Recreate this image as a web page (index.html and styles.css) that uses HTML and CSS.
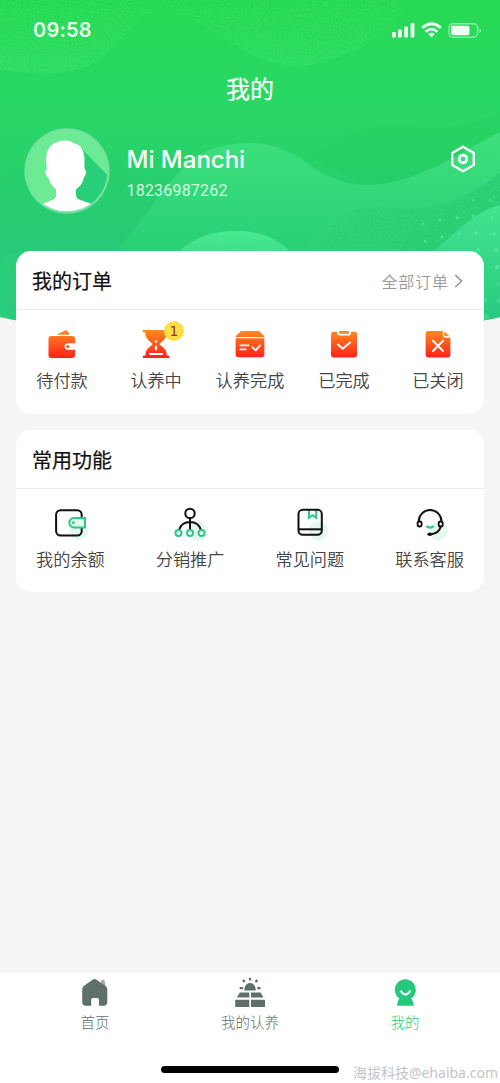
FILE: index.html
```html
<!DOCTYPE html>
<html lang="zh-CN">
<head>
<meta charset="utf-8">
<meta name="viewport" content="width=device-width, initial-scale=1">
<title>我的</title>
<link rel="stylesheet" href="styles.css">
</head>
<body>
<div class="app">
  <svg class="backdrop" viewBox="0 0 500 330" aria-hidden="true">
    <defs>
      <linearGradient id="sky" gradientUnits="userSpaceOnUse" x1="0" y1="0" x2="0" y2="330"><stop offset="0" stop-color="#28da55"/><stop offset=".36" stop-color="#29d667"/><stop offset=".7" stop-color="#26cc70"/><stop offset="1" stop-color="#26c97e"/></linearGradient>
      <linearGradient id="top" x1="0" y1="0" x2="0" y2="1"><stop offset="0" stop-color="#24d750"/><stop offset="1" stop-color="#2bdc60"/></linearGradient>
      <linearGradient id="wave" x1="0" y1="0" x2="0" y2="1"><stop offset="0" stop-color="#3de07b"/><stop offset=".65" stop-color="#28cf77"/><stop offset="1" stop-color="#28cd79"/></linearGradient>
      <linearGradient id="waveR" x1="0" y1="0" x2="1" y2="0"><stop offset="0" stop-color="#2bd176"/><stop offset="1" stop-color="#24c973"/></linearGradient>
      <linearGradient id="dark" x1="0" y1="0" x2="0" y2="1"><stop offset="0" stop-color="#29d464"/><stop offset="1" stop-color="#23cc69"/></linearGradient>
      <linearGradient id="hill" x1="0" y1="0" x2="0" y2="1"><stop offset="0" stop-color="#43e48f"/><stop offset="1" stop-color="#26c97e"/></linearGradient>
      <linearGradient id="mound" x1="0" y1="0" x2="0" y2="1"><stop offset="0" stop-color="#47e894"/><stop offset="1" stop-color="#3bdc8a"/></linearGradient>
      <linearGradient id="left" x1="0" y1="0" x2="0" y2="1"><stop offset="0" stop-color="#28d166"/><stop offset="1" stop-color="#26c97a"/></linearGradient>
      <filter id="grain" x="0" y="0" width="1" height="1" color-interpolation-filters="sRGB">
        <feTurbulence type="fractalNoise" baseFrequency=".75" numOctaves="2" seed="4"/>
        <feColorMatrix values="0 0 0 0 .35  0 0 0 0 .95  0 0 0 0 .55  .9 0 0 0 -.36"/>
        <feComposite in2="SourceGraphic" operator="in" result="n"/>
        <feMerge><feMergeNode in="SourceGraphic"/><feMergeNode in="n"/></feMerge>
      </filter>
      <clipPath id="edge"><path d="M0 0H500V317Q375 345 250 345Q125 345 0 317Z"/></clipPath>
    </defs>
    <g clip-path="url(#edge)">
      <path fill="url(#sky)" d="M0 0H500V330H0Z"/>
      <path fill="url(#top)" filter="url(#grain)" d="M0 0H409C390 35 340 66 297 66C268 66 247 54 224 38C196 20 180 12 163 12C145 12 138 20 126 34C105 58 90 72 50 73Q25 74 0 70Z"/>
      <path fill="url(#left)" d="M0 175C35 150 80 145 110 158C145 176 170 193 180 205L116 260H0Z"/>
      <path fill="url(#dark)" d="M310 158C348 127 380 122 412 126C450 131 475 123 500 112V205C440 200 385 198 310 158Z"/>
      <path fill="url(#wave)" d="M112 255C145 222 155 195 178 173C196 150 223 144 245 143C278 142 298 156 317 170C336 181 350 185 366 185C416 184 456 155 500 132V325H112Z"/>
      <path fill="url(#waveR)" filter="url(#grain)" opacity=".7" d="M300 252C325 225 349 207 376 207C410 210 448 215 500 173V260H300Z"/>
      <path fill="url(#mound)" filter="url(#grain)" d="M176 255C193 236 215 231 237 231C260 231 280 239 293 255Z"/>
      <path fill="url(#hill)" d="M430 255C454 234 475 211 500 205V325H430Z"/>
      <path fill="#2acc7c" filter="url(#grain)" d="M0 259C20 247 39 248 55 251V325H0Z" opacity=".5"/>
      <g fill="#67e8a7" opacity=".7"><circle cx="423" cy="224" r="1.2"/><circle cx="440" cy="220" r="1.2"/><circle cx="457" cy="218" r="1.4"/><circle cx="473" cy="216" r="1.4"/><circle cx="492" cy="217" r="1.5"/><circle cx="425" cy="241" r="1.2"/><circle cx="442" cy="237" r="1.4"/><circle cx="459" cy="234" r="1.5"/><circle cx="476" cy="233" r="1.7"/><circle cx="494" cy="234" r="1.8"/><circle cx="478" cy="250" r="1.8"/><circle cx="496" cy="250" r="2"/><circle cx="497" cy="267" r="2.2"/><circle cx="490" cy="200" r="1"/><circle cx="473" cy="200" r="1"/></g>
      <g fill="#4bdc98" opacity=".6"><circle cx="498" cy="284" r="2.3"/><circle cx="485" cy="300" r="2.4"/><circle cx="499" cy="301" r="2.4"/><circle cx="486" cy="317" r="3"/></g>
    </g>
  </svg>

  <header class="status">
    <span class="time">09:58</span>
    <svg width="90" height="18" viewBox="0 0 90 18">
      <g fill="#effff3"><rect x="1" y="11" width="3.8" height="5.5" rx="1"/><rect x="7" y="8.5" width="3.8" height="8" rx="1"/><rect x="13.2" y="5.5" width="3.8" height="11" rx="1"/><rect x="19.6" y="2" width="3.8" height="14.5" rx="1"/></g>
      <g fill="none" stroke="#effff3" stroke-width="2.7"><path d="M31.2 6.8Q40.5-1.3 49.8 6.8"/><path d="M34.6 10.7Q40.5 5.6 46.4 10.7"/></g><path fill="#effff3" d="M37.3 13Q40.5 10.4 43.7 13L40.5 16.4Z"/>
      <rect x="58" y="2.7" width="28.6" height="13.6" rx="4" fill="none" stroke="#8beca5" stroke-width="1.4"/><rect x="60" y="4.8" width="18.5" height="9.5" rx="2" fill="#effff3"/><path fill="#8beca5" d="M88.4 7Q92 9.4 88.4 12Z"/>
    </svg>
  </header>
  <h1 class="title">我的</h1>

  <section class="profile">
    <svg class="avatar" viewBox="0 0 86 86">
      <defs><clipPath id="face"><circle cx="43" cy="43" r="40.5"/></clipPath></defs>
      <circle cx="43" cy="43" r="42.7" fill="#75e2a0"/><circle cx="43" cy="43" r="40.5" fill="#6ceb94"/>
      <g clip-path="url(#face)"><path fill="#29ce78" d="M57 20L90 54V90H46Z"/>
      <path fill="#fff" d="M42.5 12.5C45 12.5 48 13.6 50 15.4C56 16 60.5 22 60.5 31V41C63 42 62 48 60 49Q58.5 57 52 61.5V67C52 73 60 72 68 76.5Q57 83.5 43 83.5Q28 83.5 18 76.5C25 72 32 73 32 67V61Q26 57 24.5 50C21 48 20.5 42 23 41C22 34 21.5 28 24 22Q28 12.5 42.5 12.5Z"/></g>
    </svg>
    <div class="who"><div class="name">Mi Manchi</div><div class="phone">18236987262</div></div>
    <svg class="gear" viewBox="0 0 28 30" fill="none" stroke="#fff" stroke-width="2.4" stroke-linejoin="round"><path d="M14 2.7L24.8 9V21L14 27.3L3.2 21V9Z"/><circle cx="14" cy="15" r="3.8" stroke-width="2.7"/></svg>
  </section>

  <svg class="defs" width="0" height="0"><defs><linearGradient id="fire" gradientUnits="userSpaceOnUse" x1="0" y1="2" x2="0" y2="30"><stop stop-color="#ff8d1f"/><stop offset="1" stop-color="#ff201b"/></linearGradient></defs></svg>

  <main>
    <section class="card">
      <div class="head"><h2>我的订单</h2><a class="more">全部订单<svg width="10" height="14" viewBox="0 0 10 14" fill="none" stroke="#999" stroke-width="1.7"><path d="M1.3 1L7.5 7L1.3 13"/></svg></a></div>
      <div class="orders">
        <div class="item"><svg class="icon" viewBox="0 0 32 32"><path fill="url(#fire)" d="M10.5 6.8L18 3.1Q20.5 1.5 21.8 3.2L23.8 6.8ZM5 8H26Q29 8 29 11V15.3H21.8A3.2 3.2 0 0 0 21.8 21.7H29V26.5Q29 30 25.8 30H5Q2.5 30 2.5 27.3V10.5Q2.5 8 5 8Z"/><circle cx="21.8" cy="18.5" r="1.5" fill="#ff4b1e"/></svg><span>待付款</span></div>
        <div class="item"><svg class="icon" viewBox="0 0 32 32"><path fill="url(#fire)" d="M3 2H29Q30 4.2 28 4.5H26.8Q27 11 20 15.2Q19 16 20 17Q26.8 21 27 27.4H28.5Q30 28 29 30H3Q2 28 3.5 27.4H5.2Q5.5 21 12 17Q13 16 12 15.2Q5.2 11 5.2 4.5H3.5Q2 4 3 2Z"/><g fill="#fff"><circle cx="16" cy="13.5" r="1.3"/><rect x="14.9" y="17.5" width="2.2" height="5" rx="1"/><rect x="9" y="25" width="14" height="2" rx="1"/></g></svg><b class="badge">1</b><span>认养中</span></div>
        <div class="item"><svg class="icon" viewBox="0 0 32 32"><path fill="url(#fire)" d="M7 3H25L30.4 8.3V9H1.6V8.3ZM1.6 10.3H30.4V26Q30.4 29.2 27.4 29.2H4.6Q1.6 29.2 1.6 26Z"/><path d="M6.3 17.3H14.7M6.3 21.3H11.7M18.5 19.3L21.7 22.4L26 17.4" fill="none" stroke="#fff" stroke-width="1.8" stroke-linecap="round" stroke-linejoin="round"/></svg><span>认养完成</span></div>
        <div class="item"><svg class="icon" viewBox="0 0 32 32"><rect x="3" y="3.7" width="26" height="25.7" rx="2.7" fill="url(#fire)"/><rect x="9" y="1.5" width="14" height="6" rx="2" fill="#fff"/><rect x="11" y="3" width="10" height="2.7" rx="1" fill="url(#fire)"/><path d="M10 16.5L14.7 20.8L22 14.5" fill="none" stroke="#fff" stroke-width="2" stroke-linecap="round" stroke-linejoin="round"/></svg><span>已完成</span></div>
        <div class="item"><svg class="icon" viewBox="0 0 32 32"><path fill="url(#fire)" d="M6 3H21.4L28.4 9.5V27Q28.4 29.4 26 29.4H6Q3.6 29.4 3.6 27V5.4Q3.6 3 6 3Z"/><path d="M21.5 2.5V6.8Q21.5 9 24 9H28.7" fill="none" stroke="#fff" stroke-width="1.3"/><path fill="#ff8a20" d="M22.6 3.8L27 7.9H24.2Q22.6 7.9 22.6 6.3Z"/><path d="M11 12.8L21 23M21 12.8L11 23" stroke="#fff" stroke-width="2" stroke-linecap="round"/></svg><span>已关闭</span></div>
      </div>
    </section>

    <section class="card">
      <div class="head"><h2>常用功能</h2></div>
      <div class="tools">
        <div class="item"><svg class="tool" viewBox="0 0 36 36" fill="none"><circle cx="26.5" cy="25.5" r="9.5" fill="#e5f8ee"/><rect x="4.1" y="5.2" width="25.6" height="25.4" rx="4.5" stroke="#111" stroke-width="2"/><path d="M22 13H33V22.4H22A4.7 4.7 0 0 1 22 13Z" fill="#e5f8ee" stroke="#27c984" stroke-width="2" stroke-linejoin="round"/><circle cx="21.4" cy="17.7" r="1.4" fill="#27c984"/></svg><span>我的余额</span></div>
        <div class="item"><svg class="tool" viewBox="0 0 36 36" fill="none"><circle cx="26" cy="26.2" r="9.5" fill="#e5f8ee"/><g stroke="#111" stroke-width="2"><circle cx="18" cy="8.4" r="4.7"/><path d="M18 13V25M7 25Q9.5 17 18 17Q26.5 17 29 25"/></g><g stroke="#27c984" stroke-width="2" fill="#fff"><circle cx="6.5" cy="28" r="3"/><circle cx="18" cy="28" r="3"/><circle cx="29.5" cy="28" r="3"/></g></svg><span>分销推广</span></div>
        <div class="item"><svg class="tool" viewBox="0 0 36 36" fill="none"><circle cx="26.5" cy="26" r="9.5" fill="#e5f8ee"/><path d="M17 5V12.8L20.6 10.3L24.2 12.8V5" stroke="#27c984" stroke-width="2"/><rect x="6.5" y="4.8" width="23.3" height="25" rx="4.3" stroke="#111" stroke-width="2"/><path d="M6.5 24.3H29.8" stroke="#111" stroke-width="2"/></svg><span>常见问题</span></div>
        <div class="item"><svg class="tool" viewBox="0 0 36 36" fill="none"><circle cx="26.6" cy="26" r="9.5" fill="#e5f8ee"/><path d="M6.7 16.5A11.4 11.5 0 0 1 29.5 16.5M29 21Q27 28.5 19 29.2" stroke="#111" stroke-width="2"/><rect x="5.6" y="16.5" width="4" height="5" rx="1.7" stroke="#111" stroke-width="1.8"/><rect x="26.7" y="16.5" width="4" height="5" rx="1.7" stroke="#111" stroke-width="1.8"/><ellipse cx="17.8" cy="29.3" rx="2.4" ry="1.8" fill="#111"/><path d="M14.3 21Q18 24.3 21.8 21" stroke="#27c984" stroke-width="2"/></svg><span>联系客服</span></div>
      </div>
    </section>
  </main>

  <nav class="tabs">
    <div class="tab"><svg viewBox="0 0 32 32"><path fill="#a4ada9" d="M22 4Q24 .8 26 4V12L22 9Z"/><path fill="#5f706a" d="M13.6 2.8Q15.6 1.3 17.6 2.8L26.6 9Q28.3 10.4 28.3 12.5V25Q28.3 28.8 24.6 28.8H20V23Q20 21 18.2 21H14Q12.2 21 12.2 23V28.8H7Q3.2 28.8 3.2 25V12.5Q3.2 10.4 4.8 9Z"/></svg><span>首页</span></div>
    <div class="tab"><svg viewBox="0 0 32 32"><path fill="#5f706a" d="M10.3 13.5C10.3 8.8 12.8 6 16 6S21.8 8.8 21.8 13.5ZM5.8 15.6H15.3V20.4H2.8ZM17 15.6H26.6L29.5 20.4H17ZM1.2 22.7H15.3V30H1.2ZM17 22.7H31V30H17Z"/><path stroke="#5f706a" stroke-width="2.2" d="M16 .7V3.5M9 2.8L10.7 5M23.3 2.8L21.6 5M5.7 11.2H9M23.2 11.2H26.5"/></svg><span>我的认养</span></div>
    <div class="tab active"><svg viewBox="0 0 32 32"><path fill="#26c97c" d="M10.3 21.4A10.5 10.5 0 1 1 22.3 21.4Q24 23.5 25 28.7H7.8Q8.7 23.5 10.3 21.4Z"/><path fill="none" stroke="#fff" stroke-width="2" stroke-linecap="round" d="M11.8 14.2Q16.5 20.7 21.2 14.2"/></svg><span>我的</span></div>
  </nav>
  <div class="homebar"></div>
  <div class="watermark">海拔科技@ehaiba.com</div>
</div>
</body>
</html>
```
FILE: styles.css
```css
* { box-sizing: border-box; }
body { margin: 0; font-family: "Noto Sans CJK SC", sans-serif; background: #f5f5f5; }
h1, h2 { margin: 0; font-weight: 400; -webkit-text-stroke: .22px currentColor; }
svg { display: block; flex: none; }
.app { position: relative; width: 500px; height: 1083px; overflow: hidden; display: flex; flex-direction: column; }
.app > * { position: relative; }
.app > .backdrop { position: absolute; top: 0; left: 0; width: 500px; height: 330px; }
.app > .defs { position: absolute; }
.status { display: flex; justify-content: space-between; align-items: center; height: 60px; padding: 0 19px 0 33px; }
.time { color: #eafff0; font: 600 20px/24px Inter, sans-serif; letter-spacing: .2px; }
.title { height: 56px; line-height: 56px; text-align: center; font-size: 24px; color: #fff; }
.profile { display: flex; height: 135px; padding: 12px 24px 0; align-items: flex-start; }
.avatar { width: 86px; height: 86px; }
.who { flex: 1; padding: 17px 0 0 16.5px; color: #fff; }
.name { font: 500 24px/30px Inter, sans-serif; letter-spacing: 0; }
.phone { margin-top: 6px; font: 400 16px/20px Roboto, sans-serif; letter-spacing: .2px; color: #d5f7e2; }
.gear { width: 28px; height: 30px; margin: 16px -1px 0 0; }
main { flex: 1; padding: 0 16px; display: flex; flex-direction: column; gap: 16px; }
.card { height: 162.5px; background: #fff; border-radius: 15px; }
.head { height: 59px; display: flex; align-items: center; justify-content: space-between; padding: 2px 20px 0 16px; border-bottom: 1px solid #ececec; }
.head h2 { font-size: 20px; line-height: 30px; color: #111; }
.more { display: flex; align-items: center; gap: 5px; font-size: 16px; letter-spacing: .9px; color: #999; font-weight: 350; }
.orders { display: grid; grid-template-columns: repeat(5, 94px); justify-content: center; padding-top: 18px; }
.tools { display: flex; justify-content: space-between; padding: 16px 20px 0 20px; }
.item { position: relative; display: flex; flex-direction: column; align-items: center; font-size: 17.2px; line-height: 26px; color: #444; white-space: nowrap; font-weight: 350; }
.icon { width: 32px; height: 32px; margin-bottom: 7px; }
.tool { width: 36px; height: 36px; margin-bottom: 5px; }
.badge { position: absolute; left: 55px; top: -7px; width: 20px; height: 20px; border-radius: 50%; background: #ffdf43; color: #933238; text-align: center; font: 400 14px/20px "DejaVu Sans", sans-serif; }
.tabs { height: 110px; background: #fff; display: grid; grid-template-columns: repeat(3, 155px); justify-content: center; padding-top: 4px; }
.tab { display: flex; flex-direction: column; align-items: center; font-size: 14.5px; line-height: 22px; color: #5f706a; font-weight: 300; gap: 2px; }
.tab svg { width: 32px; height: 32px; }
.tab.active { color: #26c97c; }
.app > .homebar { position: absolute; left: 161px; bottom: 10.5px; width: 178px; height: 7px; border-radius: 4px; background: #000; }
.app > .watermark { position: absolute; right: 2px; bottom: 0; font: 400 14px/20px "Noto Sans", "Noto Sans CJK SC", sans-serif; color: #c4c4c4; white-space: nowrap; }
```
